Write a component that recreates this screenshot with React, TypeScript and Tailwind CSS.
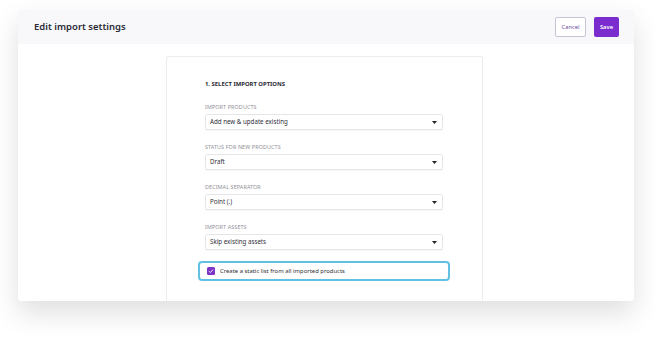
const fields = [
  { label: 'IMPORT PRODUCTS', value: 'Add new & update existing' },
  { label: 'STATUS FOR NEW PRODUCTS', value: 'Draft' },
  { label: 'DECIMAL SEPARATOR', value: 'Point (.)' },
  { label: 'IMPORT ASSETS', value: 'Skip existing assets' },
];

const Caret = () => (
  <svg width="5" height="3" viewBox="0 0 5 3" className="shrink-0">
    <path d="M0 0h5L2.5 3z" fill="#222" />
  </svg>
);

const SelectField = ({ label, value }: { label: string; value: string }) => (
  <div className="mb-[13px]">
    <div className="h-[8px] mb-[3px] text-[5.4px] leading-[8px] tracking-[0.02em] text-[#909098]">
      {label}
    </div>
    <div className="h-[16px] flex items-center justify-between pl-[4px] pr-[5px] bg-white border border-[#e6e6ea] rounded-[2px] shadow-[0_1px_1px_rgba(0,0,0,0.04)]">
      <span className="text-[6.2px] text-[#2f2f38]">{value}</span>
      <Caret />
    </div>
  </div>
);

export default function App() {
  return (
    <div
      className="w-[655px] h-[347px] bg-white pt-[10px] overflow-hidden"
      style={{ fontFamily: '"Noto Sans", "Open Sans", sans-serif' }}
    >
      <div className="ml-[18px] w-[616px] h-[291px] bg-white rounded-[3px] overflow-hidden shadow-[0_12px_28px_rgba(0,0,0,0.13)]">
        <header className="h-[34px] bg-[#f8f8fa] flex items-center justify-between pl-[16px] pr-[15px]">
          <h1 className="text-[9.5px] font-semibold text-[#2b2b36]">Edit import settings</h1>
          <div className="flex items-center gap-[8px]">
            <button className="h-[20px] w-[31px] rounded-[2px] border border-[#c9c3d6] bg-white text-[5.8px] text-[#6e4fa0]">
              Cancel
            </button>
            <button className="h-[20px] w-[25px] rounded-[2px] bg-[#7b2ccf] text-[5.8px] font-semibold text-white">
              Save
            </button>
          </div>
        </header>

        <div className="pt-[12px]">
          <div className="ml-[148px] w-[317px] h-[300px] border border-[#ececef] rounded-[2px] pt-[23px] pl-[38px] pr-[39px]">
            <h2 className="h-[8px] mb-[15px] text-[5.9px] leading-[8px] font-bold text-[#2b2b36]">
              1. SELECT IMPORT OPTIONS
            </h2>
            {fields.map((f) => (
              <SelectField key={f.label} label={f.label} value={f.value} />
            ))}
            <label className="-mx-[7px] mt-[-2px] h-[20px] flex items-center gap-[5px] pl-[7px] border-2 border-[#62c1e3] rounded-[4px]">
              <span className="w-[8px] h-[8px] rounded-[1.5px] bg-[#7d35c8] flex items-center justify-center">
                <svg width="6" height="6" viewBox="0 0 6 6">
                  <path d="M1 3.2l1.3 1.3L5 1.6" fill="none" stroke="#fff" strokeWidth="0.9" />
                </svg>
              </span>
              <span className="text-[5.9px] text-[#2f2f38]">Create a static list from all imported products</span>
            </label>
          </div>
        </div>
      </div>
    </div>
  );
}
